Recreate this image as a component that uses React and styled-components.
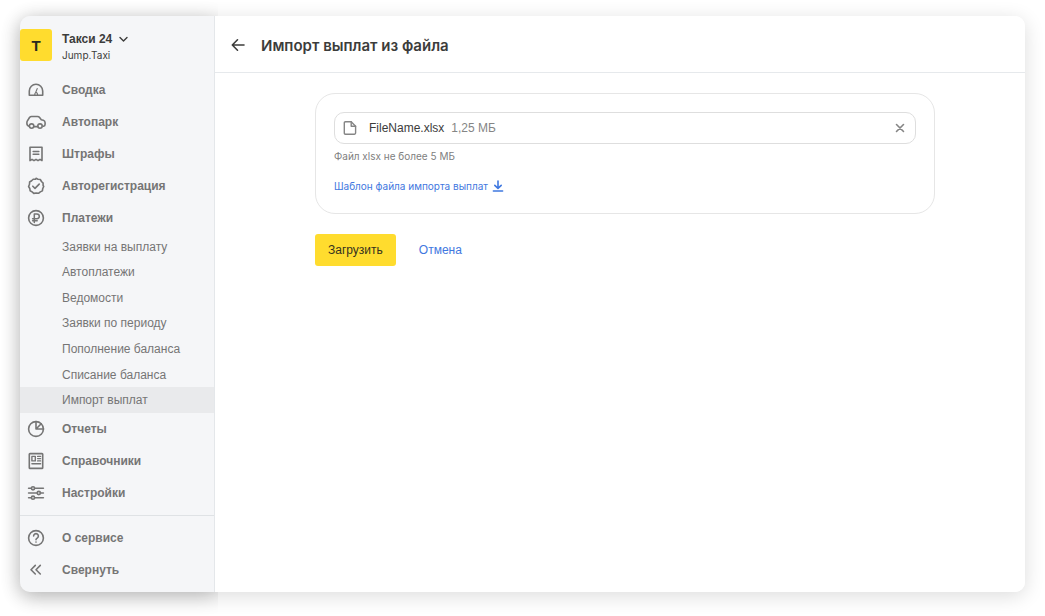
import React from "react";
import styled, { createGlobalStyle, css } from "styled-components";

const GlobalStyle = createGlobalStyle`
    *, *::before, *::after {
        box-sizing: border-box;
    }

    body {
        margin: 0;
        background: #fff;
        font-family: "Liberation Sans", Arial, sans-serif;
        font-size: 12px;
        color: #3c3c3b;
    }

    button {
        font: inherit;
        color: inherit;
        background: none;
        border: 0;
        padding: 0;
        cursor: pointer;
    }

    a {
        text-decoration: none;
    }
`

const Page = styled.div`
    display: flex;
    min-height: 100vh;
    padding: 16px 20px 24px;
`

const Window = styled.div`
    display: flex;
    flex: 1;
    border-radius: 10px;
    background: #fff;
    box-shadow: 0 4px 20px rgba(0, 0, 0, 0.14);
`

const Sidebar = styled.aside`
    display: flex;
    flex-direction: column;
    flex: 0 0 195px;
    border-right: 1px solid #e4e7ea;
    border-radius: 10px 0 0 10px;
    background: #f5f6f8;
    box-shadow: 0 4px 20px rgba(0, 0, 0, 0.2);
    clip-path: inset(-40px -3px -40px -40px);
`

const Account = styled.button`
    display: flex;
    align-items: center;
    gap: 10px;
    height: 58px;
    text-align: left;
`

const Logo = styled.span`
    display: grid;
    place-items: center;
    width: 32px;
    height: 32px;
    border-radius: 3px;
    background: #ffdc2e;
    color: #2b2a20;
    font-size: 15px;
    font-weight: 600;
`

const AccountText = styled.span`
    display: flex;
    flex-direction: column;
    padding-top: 4px;
    font-size: 10px;
    font-family: Inter, sans-serif;
    line-height: 16px;
`

const AccountName = styled.span`
    display: flex;
    align-items: center;
    gap: 7px;
    font-size: 12px;
    font-family: "Liberation Sans", Arial, sans-serif;
    font-weight: 600;
`

const Menu = styled.ul`
    margin: 0;
    padding: 0;
    list-style: none;

    & + & {
        margin-top: 6px;
        padding-top: 6px;
        border-top: 1px solid #dfe2e5;
    }
`

const menuRow = css`
    display: flex;
    align-items: center;
    width: 100%;
    color: #757575;
`

const MenuLink = styled.a`
    ${menuRow}
    gap: 10px;
    height: 32px;
    font-weight: 600;
`

const MenuIcon = styled.span`
    display: grid;
    place-items: center;
    width: 32px;
`

const SubMenu = styled.ul`
    display: grid;
    grid-auto-rows: 1fr;
    height: 179px;
    margin: 0;
    padding: 0;
    list-style: none;
`

const SubLink = styled.a`
    ${menuRow}
    height: 100%;
    padding-left: 42px;
    background: ${({ $active }) => ($active ? "#e9eaec" : "transparent")};
`

const Main = styled.main`
    position: relative;
    flex: 1;
    min-width: 0;
    border-radius: 0 10px 10px 0;
    background: #fff;
`

const Header = styled.header`
    display: flex;
    align-items: center;
    gap: 16px;
    height: 57px;
    padding: 2px 16px 0;
    border-bottom: 1px solid #e6e9ec;
`

const Title = styled.h1`
    margin: 0;
    font-family: Inter, sans-serif;
    font-size: 15px;
    font-weight: 600;
`

const IconButton = styled.button`
    display: grid;
    place-items: center;
    color: ${({ $muted }) => ($muted ? "#858585" : "#3c3c3b")};
`

const Form = styled.form`
    padding: 20px 90px 20px 100px;
`

const Card = styled.section`
    padding: 18px 18px 19px;
    border: 1px solid #e6e6e6;
    border-radius: 20px;
`

const FileField = styled.div`
    display: flex;
    align-items: center;
    height: 32px;
    padding: 0 9px 0 8px;
    border: 1px solid #dedede;
    border-radius: 10px;
    color: #858585;
`

const FileName = styled.span`
    margin: 0 7px 0 12px;
    color: #3c3c3b;
`

const FileSize = styled.span`
    flex: 1;
`

const Hint = styled.p`
    margin: 4px 0 14px;
    font-family: Inter, sans-serif;
    font-size: 10px;
    line-height: 16px;
    color: #808080;
`

const TemplateLink = styled.a`
    display: flex;
    align-items: center;
    gap: 4px;
    width: fit-content;
    font-family: Inter, sans-serif;
    font-size: 10px;
    line-height: 16px;
    color: #3f78e0;
`

const Actions = styled.div`
    display: flex;
    align-items: center;
    gap: 23px;
    margin-top: 20px;
`

const SubmitButton = styled.button`
    height: 32px;
    padding: 0 13px;
    border-radius: 3px;
    background: #ffdc2e;
    color: #35321f;
    font-weight: 500;
`

const CancelLink = styled.a`
    color: #3f78e0;
`

function Icon({ size = 20, width = 1.6, children }) {
    return (
        <svg width={size} height={size} viewBox={`0 0 ${size} ${size}`} fill="none" stroke="currentColor"
             strokeWidth={width} strokeLinecap="round" strokeLinejoin="round" aria-hidden="true">
            {children}
        </svg>
    )
}

const icons = {
    summary: <>
        <path d="M3.3 15.2V11a6.7 6.7 0 0 1 13.4 0v4.2z"/>
        <path d="M8.8 15q-.2-1.6.9-2.6l1.5-3.8M11.6 15q0-1.4-.9-2.4" strokeWidth="1.2"/>
    </>,
    cars: <>
        <path d="M3 14.3Q.9 13.9.9 11.6v-1q0-1.5 1-2.5l1.6-2.6q.8-1 2-1h6q1.3 0 2.1 1l1.7 2.2 2 .6q1.8.6 1.8 2.4v1.6q0 1.7-1.6 2"/>
        <path d="M7.9 14.6h3.8"/>
        <circle cx="5.6" cy="14.1" r="2.2"/>
        <circle cx="14" cy="14.1" r="2.2"/>
    </>,
    fines: <>
        <path d="M4 3.2h12v13.4l-2-1.2-2 1.2-2-1.2-2 1.2-2-1.2-2 1.2z"/>
        <path d="M7.2 7.5h5.6M7.2 10.3h5.6"/>
    </>,
    registration: <>
        <path d="m10 2.3 2 1 2.3.2 1.2 2 1.6 1.6v2.3l.6 1-1 2.3-.3 2.2-2.1 1-1.8 1.4-2.3-.3-2.4.4-1.7-1.5-2-1.2-.3-2.2-1.2-2 .9-2.2.1-2.3 2-1.2 1.6-1.6 2.2.1z"/>
        <path d="m6.8 10.2 2.2 2.2 4.2-4.3"/>
    </>,
    payments: <>
        <circle cx="10" cy="10" r="7.4"/>
        <path d="M8.3 14.4V5.9h2.6a2.4 2.4 0 0 1 0 4.8H6.6M6.6 12.7h4.6" strokeWidth="1.5"/>
    </>,
    reports: <>
        <circle cx="10" cy="10" r="7.4"/>
        <path d="M10 2.5V10l5.2-5.2M10 10h7.5"/>
    </>,
    handbooks: <>
        <path d="M4 2.6h12q.7 0 .7.7v13.4q0 .7-.7.7H4q-.7 0-.7-.7V3.3q0-.7.7-.7z"/>
        <path d="M5.9 5.4h3.4v4.5H5.9zM11.6 5.4h3M11.6 7.6h3M11.6 9.9h3M5.9 12.8h8.7" strokeWidth="1.4"/>
    </>,
    settings: <>
        <path d="M2.6 5.3h2.8M8.6 5.3h8.8M2.6 10h8.6M14.4 10h3M2.6 14.7h2.8M8.6 14.7h8.8"/>
        <circle cx="7" cy="5.3" r="1.6"/>
        <circle cx="12.8" cy="10" r="1.6"/>
        <circle cx="7" cy="14.7" r="1.6"/>
    </>,
    about: <>
        <circle cx="10" cy="10" r="7.4"/>
        <path d="M7.6 8a2.4 2.4 0 1 1 3.6 2.1q-1.2.7-1.2 1.6M10 14v.1"/>
    </>,
    collapse: <path d="M9.3 5.4 5 9.7l4.3 4.3M14.3 5.4 10 9.7l4.3 4.3"/>,
}

const menu = [
    { id: "summary", title: "Сводка" },
    { id: "cars", title: "Автопарк" },
    { id: "fines", title: "Штрафы" },
    { id: "registration", title: "Авторегистрация" },
    {
        id: "payments",
        title: "Платежи",
        items: [
            "Заявки на выплату",
            "Автоплатежи",
            "Ведомости",
            "Заявки по периоду",
            "Пополнение баланса",
            "Списание баланса",
            "Импорт выплат",
        ],
    },
    { id: "reports", title: "Отчеты" },
    { id: "handbooks", title: "Справочники" },
    { id: "settings", title: "Настройки" },
]

const serviceMenu = [
    { id: "about", title: "О сервисе" },
    { id: "collapse", title: "Свернуть" },
]

function MenuList({ list, active }) {
    return (
        <Menu>
            {list.map(({ id, title, items }) => (
                <li key={id}>
                    <MenuLink href={`#${id}`}>
                        <MenuIcon><Icon>{icons[id]}</Icon></MenuIcon>
                        {title}
                    </MenuLink>
                    {items && <SubMenu>
                        {items.map(item => (
                            <li key={item}>
                                <SubLink href="#payments" $active={item === active}>{item}</SubLink>
                            </li>
                        ))}
                    </SubMenu>}
                </li>
            ))}
        </Menu>
    )
}

export default function App() {
    return (
        <Page>
            <GlobalStyle/>
            <Window>
                <Sidebar>
                    <Account type="button">
                        <Logo>Т</Logo>
                        <AccountText>
                            <AccountName>
                                Такси 24
                                <Icon size={9} width={1.4}><path d="m1 2.4 3.5 3.5L8 2.4"/></Icon>
                            </AccountName>
                            Jump.Taxi
                        </AccountText>
                    </Account>
                    <nav>
                        <MenuList list={menu} active="Импорт выплат"/>
                        <MenuList list={serviceMenu}/>
                    </nav>
                </Sidebar>
                <Main>
                    <Header>
                        <IconButton type="button" aria-label="Назад">
                            <Icon size={14}><path d="M13 7H1.5M6.5 1.8 1.3 7l5.2 5.2"/></Icon>
                        </IconButton>
                        <Title>Импорт выплат из файла</Title>
                    </Header>
                    <Form onSubmit={e => e.preventDefault()}>
                        <Card>
                            <FileField>
                                <Icon size={14} width={1.4}>
                                    <path d="M2.4.8h5.8l4.4 4.4v6.9q0 1.1-1.1 1.1H2.4q-1.1 0-1.1-1.1V1.9Q1.3.8 2.4.8z"/>
                                    <path d="M8.2.8v4.4h4.4"/>
                                </Icon>
                                <FileName>FileName.xlsx</FileName>
                                <FileSize>1,25 МБ</FileSize>
                                <IconButton type="button" $muted aria-label="Удалить файл">
                                    <Icon size={12}><path d="m2.5 2.5 7 7M9.5 2.5l-7 7"/></Icon>
                                </IconButton>
                            </FileField>
                            <Hint>Файл xlsx не более 5 МБ</Hint>
                            <TemplateLink href="#template">
                                Шаблон файла импорта выплат
                                <Icon size={12}><path d="M6 1v7M2.8 5.4 6 8.4l3.2-3M1.4 11h9.2"/></Icon>
                            </TemplateLink>
                        </Card>
                        <Actions>
                            <SubmitButton type="submit">Загрузить</SubmitButton>
                            <CancelLink href="#cancel">Отмена</CancelLink>
                        </Actions>
                    </Form>
                </Main>
            </Window>
        </Page>
    )
}
